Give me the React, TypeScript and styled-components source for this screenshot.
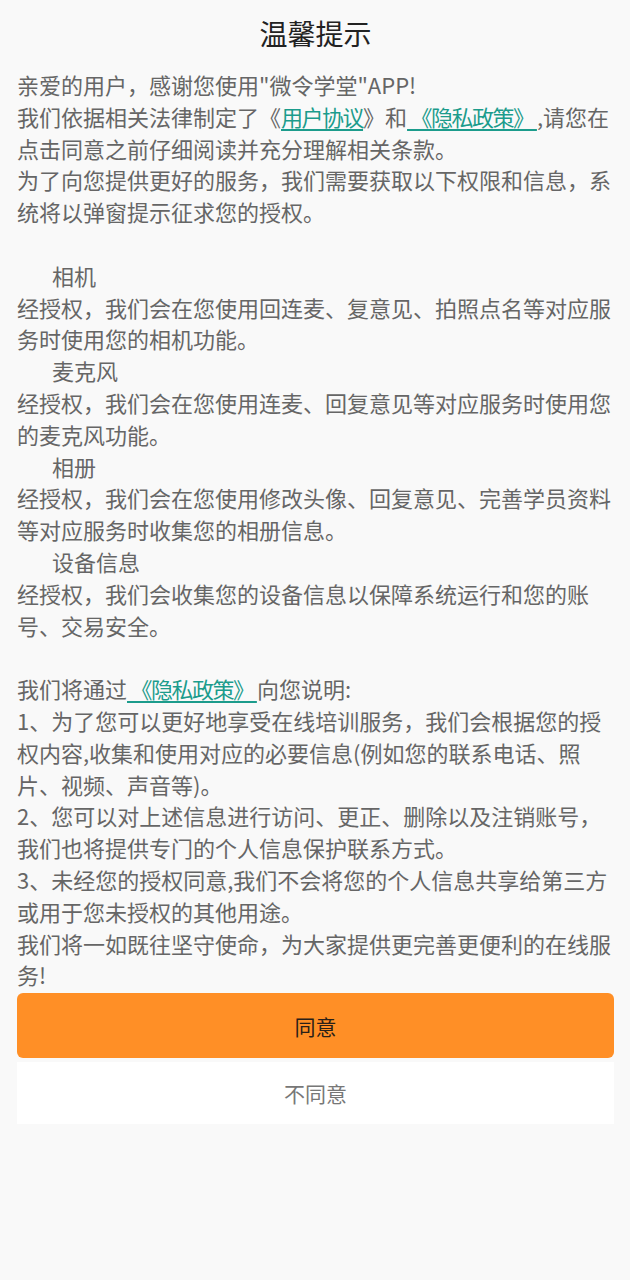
import React from "react";
import styled, { createGlobalStyle } from "styled-components";

const GlobalStyle = createGlobalStyle`
  html, body {
    margin: 0;
    padding: 0;
    background: #f9f9f9;
  }
  body {
    font-family: "Noto Sans CJK SC", "Noto Sans", sans-serif;
  }
`;

const Page = styled.div`
  width: 630px;
  min-height: 1280px;
  box-sizing: border-box;
  padding: 0 16px 0 17px;
  background: #f9f9f9;
  display: flex;
  flex-direction: column;
`;

const Title = styled.h1`
  margin: 0;
  padding-top: 13px;
  height: 40px;
  line-height: 40px;
  font-size: 28px;
  font-weight: 400;
  color: #222;
  text-align: center;
`;

const Body = styled.div`
  margin-top: 16px;
  font-size: 22px;
  line-height: 31.8px;
  color: #666;
  width: 598px;
`;

const Line = styled.p<{ $indent?: boolean }>`
  margin: 0;
  padding-left: ${(p) => (p.$indent ? "35px" : "0")};
  min-height: 31.8px;
`;

const Link = styled.span`
  color: #1c9c8c;
  text-decoration: underline;
  text-underline-offset: 3px;
  letter-spacing: -1.5px;
  white-space: pre;
`;

const Actions = styled.div`
  margin-top: 2px;
  display: flex;
  flex-direction: column;
  gap: 4px;
  width: 597px;
`;

const Button = styled.button<{ $primary?: boolean }>`
  border: none;
  border-radius: ${(p) => (p.$primary ? "6px" : "0")};
  height: ${(p) => (p.$primary ? "65px" : "62px")};
  background: ${(p) => (p.$primary ? "#ff8f26" : "#fff")};
  color: ${(p) => (p.$primary ? "#2a2018" : "#777")};
  font-family: "Noto Sans CJK SC", "Noto Sans", sans-serif;
  font-size: 21px;
  padding: 0;
  cursor: pointer;
`;

export default function App() {
  return (
    <>
      <GlobalStyle />
      <Page>
        <Title>温馨提示</Title>
        <Body>
          <Line>亲爱的用户，感谢您使用"微令学堂"APP!</Line>
          <Line>
            我们依据相关法律制定了《<Link>用户协议</Link>》和<Link> 《隐私政策》 </Link>,请您在点击同意之前仔细阅读并充分理解相关条款。
          </Line>
          <Line>为了向您提供更好的服务，我们需要获取以下权限和信息，系统将以弹窗提示征求您的授权。</Line>
          <Line />
          <Line $indent>相机</Line>
          <Line>经授权，我们会在您使用回连麦、复意见、拍照点名等对应服务时使用您的相机功能。</Line>
          <Line $indent>麦克风</Line>
          <Line>经授权，我们会在您使用连麦、回复意见等对应服务时使用您的麦克风功能。</Line>
          <Line $indent>相册</Line>
          <Line>经授权，我们会在您使用修改头像、回复意见、完善学员资料等对应服务时收集您的相册信息。</Line>
          <Line $indent>设备信息</Line>
          <Line>经授权，我们会收集您的设备信息以保障系统运行和您的账号、交易安全。</Line>
          <Line />
          <Line>
            我们将通过<Link> 《隐私政策》 </Link>向您说明:
          </Line>
          <Line>1、为了您可以更好地享受在线培训服务，我们会根据您的授权内容,收集和使用对应的必要信息(例如您的联系电话、照片、视频、声音等)。</Line>
          <Line>2、您可以对上述信息进行访问、更正、删除以及注销账号，我们也将提供专门的个人信息保护联系方式。</Line>
          <Line>3、未经您的授权同意,我们不会将您的个人信息共享给第三方或用于您未授权的其他用途。</Line>
          <Line>我们将一如既往坚守使命，为大家提供更完善更便利的在线服务!</Line>
        </Body>
        <Actions>
          <Button $primary>同意</Button>
          <Button>不同意</Button>
        </Actions>
      </Page>
    </>
  );
}
